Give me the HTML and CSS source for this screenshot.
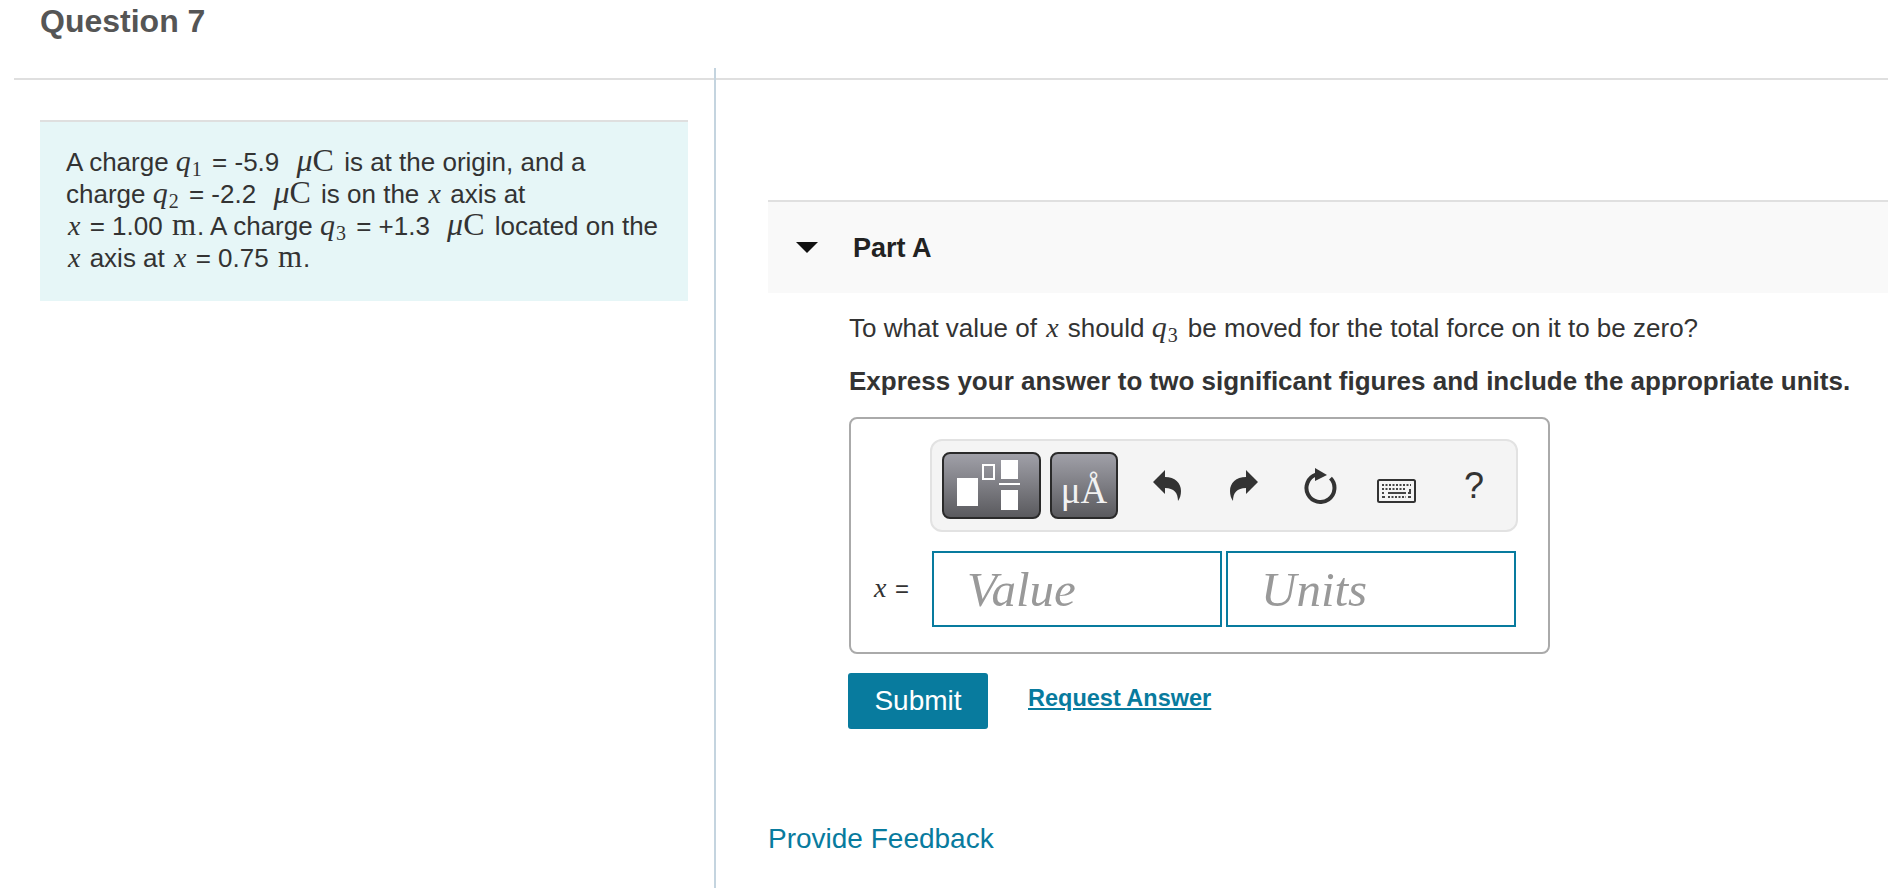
FILE: index.html
```html
<!DOCTYPE html>
<html lang="en">
<head>
<meta charset="utf-8">
<title>Question 7</title>
<link rel="stylesheet" href="styles.css">
</head>
<body>
<h1 class="title">Question 7</h1>
<main class="columns">
  <section class="left">
    <div class="intro">
      A charge <i class="m">q</i><sub class="s">1</sub> = -5.9 <span class="unit"><i class="m">μ</i>C</span> is at the origin, and a<br>
      charge <i class="m">q</i><sub class="s">2</sub> = -2.2 <span class="unit"><i class="m">μ</i>C</span> is on the <i class="x">x</i> axis at<br>
      <i class="x">x</i> = 1.00 <span class="r">m</span>. A charge <i class="m">q</i><sub class="s">3</sub> = +1.3 <span class="unit"><i class="m">μ</i>C</span> located on the<br>
      <i class="x">x</i> axis at <i class="x">x</i> = 0.75 <span class="r">m</span>.
    </div>
  </section>
  <section class="right">
    <header class="part-head">
      <span class="caret"></span>
      <h2 class="part-title">Part A</h2>
    </header>
    <div class="part-body">
      <p class="q">To what value of <i class="x">x</i> should <i class="m">q</i><sub class="s">3</sub> be moved for the total force on it to be zero?</p>
      <p class="instr">Express your answer to two significant figures and include the appropriate units.</p>
      <div class="answer">
        <div class="toolbar">
          <button class="tbtn frac" type="button" aria-label="Templates">
            <svg width="95" height="63" viewBox="0 0 95 63">
              <rect x="13" y="24" width="21" height="28" fill="#fff"/>
              <rect x="39" y="11" width="11" height="14" fill="none" stroke="#fff" stroke-width="2"/>
              <rect x="57" y="6" width="17" height="19" fill="#fff"/>
              <rect x="55" y="29" width="21" height="2" fill="#fff"/>
              <rect x="57" y="36" width="17" height="20" fill="#fff"/>
            </svg>
          </button>
          <button class="tbtn units" type="button">μÅ</button>
          <svg class="ic undo" width="28" height="31" viewBox="0 0 28 31"><path d="M0 12 12 0v7c10 0 16 6 16 14 0 4-1 7-3 10 0-8-4-13-13-13v6z" fill="#333"/></svg>
          <svg class="ic redo" width="28" height="31" viewBox="0 0 28 31"><path d="M28 12 16 0v7C6 7 0 13 0 21c0 4 1 7 3 10 0-8 4-13 13-13v6z" fill="#333"/></svg>
          <svg class="ic reset" width="33" height="36" viewBox="0 0 33 36"><path d="M12 6.700A14 14 0 1 0 26.500 10.200" fill="none" stroke="#333" stroke-width="4"/><path d="M11 0 23 7 11 13z" fill="#333"/></svg>
          <svg class="ic keys" width="39" height="24" viewBox="0 0 39 24">
            <rect x="1" y="1" width="37" height="22" rx="1.500" fill="#f4f4f4" stroke="#333" stroke-width="2"/>
            <path d="M5 6h29M5 10h24M5 14h3M31 14h3M11 18h18" stroke="#444" stroke-width="2" stroke-dasharray="2 1.500" fill="none"/>
            <path d="M11 14h18M33 10v5M5 18h3M31 18h3" stroke="#444" stroke-width="2" fill="none"/>
          </svg>
          <span class="help">?</span>
        </div>
        <div class="inputs">
          <span class="lbl"><i class="x">x</i> =</span>
          <input class="field" type="text" placeholder="Value">
          <input class="field" type="text" placeholder="Units">
        </div>
      </div>
      <div class="actions">
        <button class="submit" type="button">Submit</button>
        <a class="req" href="#">Request Answer</a>
      </div>
    </div>
    <a class="feedback" href="#">Provide Feedback</a>
  </section>
</main>
</body>
</html>
```
FILE: styles.css
```css
* { box-sizing: border-box; }
html, body { margin: 0; height: 888px; overflow: hidden; background: #fff; }
body { font-family: "Liberation Sans", Arial, sans-serif; color: #333; font-size: 26px; }
.title { margin: 0; height: 68px; padding: 1px 0 0 40px; font-size: 32px; line-height: 40px; font-weight: 700; color: #555; }
.columns { position: relative; display: grid; grid-template-columns: 716px 1fr; height: 820px; }
.columns::before { content: ""; position: absolute; left: 14px; right: 0; top: 10px; height: 2px; background: #dfdfdf; }
.left { border-right: 2px solid #c4d4df; padding: 52px 26px 0 40px; position: relative; }
.intro { height: 181px; background: #e6f6f7; border-top: 2px solid #dfdfdf; padding: 24px 26px 0; line-height: 32px; font-size: 26px; white-space: nowrap; }
.m { font-family: "Liberation Serif", serif; font-style: italic; font-size: 30px; line-height: 0; }
.x { font-family: "Liberation Serif", serif; font-style: italic; font-size: 28px; line-height: 0; margin: 0 2px; }
.s { font-family: "Liberation Serif", serif; font-size: 20px; line-height: 0; vertical-align: -5px; margin: 0 3px 0 1px; }
.r { font-family: "Liberation Serif", serif; font-size: 31px; line-height: 0; margin: 0 1px 0 2px; }
.unit { font-family: "Liberation Serif", serif; font-size: 32px; line-height: 0; margin: 0 3px 0 10px; }
.unit .m { font-size: 32px; }
.right { padding: 132px 0 0 52px; }
.part-head { display: flex; align-items: center; height: 93px; background: #f9f9f9; border-top: 2px solid #e0e0e0; padding-left: 28px; }
.caret { width: 0; height: 0; border-left: 11px solid transparent; border-right: 11px solid transparent; border-top: 11px solid #111; }
.part-title { margin: 2px 0 0 35px; font-size: 27px; font-weight: 700; color: #222; }
.part-body { padding: 17px 0 0 81px; }
.q { margin: 0; height: 53px; line-height: 36px; font-size: 26px; white-space: nowrap; }
.instr { margin: 0; height: 50px; line-height: 36px; font-size: 26px; font-weight: 700; white-space: nowrap; }
.answer { width: 701px; height: 237px; border: 2px solid #aaa; border-radius: 8px; padding: 20px 26px 0 21px; margin-top: 4px; }
.toolbar { display: flex; align-items: center; width: 588px; height: 93px; margin-left: 58px; padding-left: 10px; background: #f4f4f4; border: 2px solid #e2e2e2; border-radius: 12px; }
.tbtn { display: flex; align-items: center; justify-content: center; height: 67px; padding: 0; border: 2px solid #2a2a2a; border-radius: 8px; background: linear-gradient(#a0a0a8, #5a5a5e); color: #f2f2f2; }
.frac { width: 99px; }
.units { width: 68px; margin-left: 9px; font-family: "Liberation Serif", serif; font-size: 37px; line-height: 1; padding-top: 10px; }
.ic { flex: none; }
.undo { margin-left: 35px; }
.redo { margin-left: 49px; }
.reset { margin-left: 46px; }
.keys { margin-left: 40px; margin-top: 10px; }
.help { margin-left: 48px; font-size: 36px; color: #333; }
.inputs { display: flex; align-items: center; margin-top: 19px; }
.lbl { width: 60px; font-size: 24px; white-space: nowrap; }
.field { width: 290px; height: 76px; margin-right: 4px; border: 2px solid #087b9e; padding: 0 0 0 33px; background: #fff; font-family: "Liberation Serif", serif; font-style: italic; font-size: 49px; outline: none; }
.field::placeholder { color: #999; opacity: 1; }
.actions { display: flex; align-items: center; margin-top: 19px; margin-left: -1px; }
.submit { width: 140px; height: 56px; border: 0; border-radius: 3px; background: #087b9e; color: #fff; font-family: "Liberation Sans", Arial, sans-serif; font-size: 28px; }
.req { margin-left: 40px; margin-top: -5px; color: #087b9e; font-size: 23.500px; font-weight: 700; }
.feedback { display: block; margin-top: 92px; color: #087b9e; font-size: 28px; line-height: 36px; text-decoration: none; }
```
